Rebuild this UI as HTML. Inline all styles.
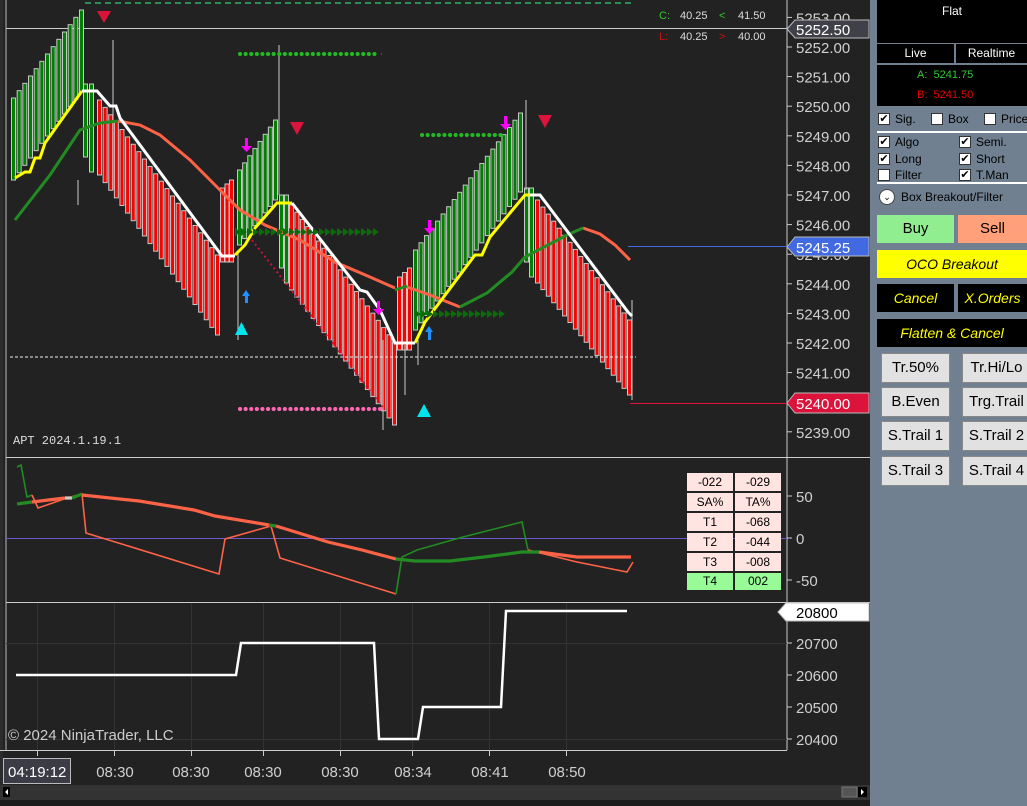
<!DOCTYPE html>
<html><head><meta charset="utf-8"><style>
*{margin:0;padding:0;box-sizing:border-box}
body{width:1027px;height:806px;overflow:hidden;background:#222;font-family:"Liberation Sans",sans-serif;position:relative}
#chart{position:absolute;left:0;top:0}
#panel{position:absolute;left:870px;top:0;width:157px;height:806px;background:#708090;font-size:12px;color:#000}
.blk{position:absolute;background:#000;color:#fff;text-align:center}
.cb{position:absolute;font-size:12px;color:#000;display:flex;align-items:center}
.cb i{display:inline-block;width:12px;height:12px;background:#fff;border:1px solid #333;margin-right:5px;font-style:normal;font-size:11px;line-height:10px;text-align:center}
.btn{position:absolute;text-align:center;font-size:15px}
.gb{position:absolute;background:#e1e1e1;border:1px solid #888;text-align:center;font-size:15px;line-height:27px;width:69px;height:30px}
.ax{font-size:15px;fill:#cfcfcf}
</style></head><body>
<svg id="chart" width="870" height="806" xmlns="http://www.w3.org/2000/svg">
<rect x="0" y="0" width="870" height="806" fill="#222"/>
<rect x="0" y="0" width="3" height="806" fill="#2c2c2c"/>
<line x1="6" y1="0" x2="6" y2="750" stroke="#bbb" stroke-width="1"/>
<line x1="787" y1="0" x2="787" y2="750" stroke="#ccc" stroke-width="1"/>
<line x1="6" y1="457.5" x2="870" y2="457.5" stroke="#ccc"/>
<line x1="6" y1="602.5" x2="870" y2="602.5" stroke="#ccc"/>
<line x1="0" y1="750.5" x2="787" y2="750.5" stroke="#ccc"/>
<line x1="6" y1="28.5" x2="787" y2="28.5" stroke="#ccc"/>
<line x1="85" y1="3" x2="632" y2="3" stroke="#2e8b57" stroke-width="2" stroke-dasharray="6,4"/>
<g id="bars"></g>
<line x1="10" y1="357" x2="636" y2="357" stroke="#eee" stroke-width="1" stroke-dasharray="3,2"/>
<line x1="628" y1="246.5" x2="787" y2="246.5" stroke="#4169e1"/>
<line x1="630" y1="403.5" x2="787" y2="403.5" stroke="#dc143c"/>
<line x1="240" y1="54" x2="380" y2="54" stroke="#22bb22" stroke-width="4" stroke-dasharray="0.1,5.5" stroke-linecap="round"/>
<line x1="422" y1="135" x2="505" y2="135" stroke="#22bb22" stroke-width="4" stroke-dasharray="0.1,5.5" stroke-linecap="round"/>
<line x1="240" y1="409" x2="385" y2="409" stroke="#ff69b4" stroke-width="4" stroke-dasharray="0.1,5.5" stroke-linecap="round"/>
<line x1="252" y1="240" x2="385" y2="410" stroke="#c8143c" stroke-width="2" stroke-dasharray="2,3"/>
<polyline fill="none" stroke="#ff6347" stroke-width="3" points="118,121 140,125 160,135 190,160 215,185 240,210 265,225 300,240 335,262 370,277 395,288"/>
<polyline fill="none" stroke="#ff6347" stroke-width="3" points="407,287 430,295 460,307"/>
<polyline fill="none" stroke="#ff6347" stroke-width="3" points="583,228 600,234 615,245 630,260"/>
<polyline fill="none" stroke="#228b22" stroke-width="3" points="15,220 50,175 80,130 100,123 118,121"/>
<polyline fill="none" stroke="#228b22" stroke-width="3" points="395,290 407,286"/>
<polyline fill="none" stroke="#228b22" stroke-width="3" points="460,307 487,293 512,272 525,257 567,235 583,228"/>
<polyline fill="none" stroke="#ffff00" stroke-width="3" points="15,178 25,172 30,172 35,158 40,158 45,143 82,91"/>
<polyline fill="none" stroke="#ffff00" stroke-width="3" points="235,255 245,245 255,228 277,203 292,203"/>
<polyline fill="none" stroke="#ffff00" stroke-width="3" points="415,343 425,322 475,255 482,255 490,237 525,195 530,195"/>
<polyline fill="none" stroke="#fff" stroke-width="3" points="82,91 97,91 110,106 116,106 120,118 222,256 235,256"/>
<polyline fill="none" stroke="#fff" stroke-width="3" points="292,203 360,290 367,292 380,310 395,343 415,343"/>
<polyline fill="none" stroke="#fff" stroke-width="3" points="530,195 540,195 628,312 632,316"/>
<g id="arr"></g>
<polygon points="97,11 111,11 104,23" fill="#dc143c"/>
<polygon points="290,122 304,122 297,135" fill="#dc143c"/>
<polygon points="538,115 552,115 545,128" fill="#dc143c"/>
<polygon points="235,335 248,335 241.5,322" fill="#00e5ee"/>
<polygon points="417,417 431,417 424,404" fill="#00e5ee"/>
<g fill="#1e90ff"><polygon points="242,296 250,296 246,290"/><rect x="245" y="296" width="3" height="7"/>
<polygon points="425,332 433,332 429,326"/><rect x="428" y="332" width="3" height="8"/></g>
<g fill="#ff00ff"><rect x="245" y="138" width="3" height="8"/><polygon points="241,146 252,146 246.5,152"/>
<rect x="377" y="301" width="3" height="8"/><polygon points="373,309 384,309 378.5,315"/>
<rect x="428" y="220" width="3" height="8"/><polygon points="424,228 435,228 429.5,234"/>
<rect x="504" y="116" width="3" height="8"/><polygon points="500,124 511,124 505.5,130"/></g>
<text x="13" y="444" font-family="Liberation Mono,monospace" font-size="12" fill="#ddd">APT 2024.1.19.1</text>
<g font-size="11" font-family="Liberation Sans,sans-serif">
<text x="659" y="19" fill="#2ecc2e">C:</text><text x="680" y="19" fill="#ddd">40.25</text><text x="719" y="19" fill="#2ecc2e">&lt;</text><text x="738" y="19" fill="#ddd">41.50</text>
<text x="659" y="40" fill="#cc1111">L:</text><text x="680" y="40" fill="#ddd">40.25</text><text x="719" y="40" fill="#cc1111">&gt;</text><text x="738" y="40" fill="#ddd">40.00</text>
</g>
<g class="ax" id="pax"></g>
<polygon points="787,29 795,20 869,20 869,38 795,38" fill="#404048" stroke="#bbb"/>
<text x="796" y="35" font-size="15" fill="#fff">5252.50</text>
<polygon points="787,247 795,237 869,237 869,256 795,256" fill="#4169e1" stroke="#bbb"/>
<text x="796" y="253" font-size="15" fill="#fff">5245.25</text>
<polygon points="787,403 795,393 869,393 869,413 795,413" fill="#dc143c" stroke="#bbb"/>
<text x="796" y="409" font-size="15" fill="#fff">5240.00</text>
<!-- indicator panel -->
<line x1="6" y1="538.5" x2="787" y2="538.5" stroke="#6a5acd"/>
<g stroke-width="1.6" fill="none">
<polyline stroke="#228b22" points="17,467 21,465 27,497 32,495"/>
<polyline stroke="#ff6347" points="32,495 38,508 67,498 82,494 86,533 219,574 225,539 271,526 280,558 396,594"/>
<polyline stroke="#228b22" points="396,594 402,557 417,550 463,537 522,522 528,550"/>
<polyline stroke="#ff6347" points="528,550 577,562 627,572 633,562"/>
</g>
<g stroke-width="3.2" fill="none">
<polyline stroke="#228b22" points="17,504 32,502"/>
<polyline stroke="#ff6347" points="32,502 65,498"/>
<polyline stroke="#ccc" points="65,498 72,498"/>
<polyline stroke="#228b22" points="72,498 82,494"/>
<polyline stroke="#ff6347" points="82,495 139,501 194,510 215,516 269,525"/>
<polyline stroke="#228b22" points="269,525 276,526"/>
<polyline stroke="#ff6347" points="276,526 328,542 362,550 396,559"/>
<polyline stroke="#228b22" points="396,559 415,561 450,561 484,557 522,552 539,552"/>
<polyline stroke="#ff6347" points="539,552 577,557 631,557"/>
</g>
<g font-size="12" text-anchor="middle" font-family="Liberation Sans,sans-serif">
<rect x="687" y="473" width="46" height="18" fill="#ffe4e1"/><text x="710" y="486">-022</text>
<rect x="735" y="473" width="46" height="18" fill="#ffe4e1"/><text x="758" y="486">-029</text>
<rect x="687" y="493" width="46" height="18" fill="#ffe4e1"/><text x="710" y="506">SA%</text>
<rect x="735" y="493" width="46" height="18" fill="#ffe4e1"/><text x="758" y="506">TA%</text>
<rect x="687" y="513" width="46" height="18" fill="#ffe4e1"/><text x="710" y="526">T1</text>
<rect x="735" y="513" width="46" height="18" fill="#ffe4e1"/><text x="758" y="526">-068</text>
<rect x="687" y="533" width="46" height="18" fill="#ffe4e1"/><text x="710" y="546">T2</text>
<rect x="735" y="533" width="46" height="18" fill="#ffe4e1"/><text x="758" y="546">-044</text>
<rect x="687" y="553" width="46" height="18" fill="#ffe4e1"/><text x="710" y="566">T3</text>
<rect x="735" y="553" width="46" height="18" fill="#ffe4e1"/><text x="758" y="566">-008</text>
<rect x="687" y="573" width="46" height="17" fill="#98fb98"/><text x="710" y="585">T4</text>
<rect x="735" y="573" width="46" height="17" fill="#98fb98"/><text x="758" y="585">002</text>
</g>
<g class="ax"><line x1="787" y1="496" x2="792" y2="496" stroke="#ccc"/><text x="796" y="502">50</text>
<line x1="787" y1="538" x2="792" y2="538" stroke="#ccc"/><text x="796" y="544">0</text>
<line x1="787" y1="580" x2="792" y2="580" stroke="#ccc"/><text x="796" y="586">-50</text></g>
<!-- volume panel -->
<g stroke="#333" stroke-width="1">
<line x1="6" y1="643.5" x2="787" y2="643.5"/><line x1="6" y1="739.5" x2="787" y2="739.5"/>
<line x1="37.5" y1="603" x2="37.5" y2="750"/><line x1="114.5" y1="603" x2="114.5" y2="750"/><line x1="191.5" y1="603" x2="191.5" y2="750"/><line x1="263.5" y1="603" x2="263.5" y2="750"/><line x1="340.5" y1="603" x2="340.5" y2="750"/><line x1="412.5" y1="603" x2="412.5" y2="750"/><line x1="489.5" y1="603" x2="489.5" y2="750"/><line x1="566.5" y1="603" x2="566.5" y2="750"/>
</g>
<polyline fill="none" stroke="#fff" stroke-width="2.5" points="16,675 236,675 241,643 374,643 379,739 418,739 423,707 501,707 506,611 627,611"/>
<polygon points="778,612 786,603 869,603 869,621 786,621" fill="#fff" stroke="#bbb"/>
<text x="796" y="618" font-size="15" fill="#000">20800</text>
<g class="ax"><line x1="787" y1="643" x2="792" y2="643" stroke="#ccc"/><text x="796" y="649">20700</text>
<line x1="787" y1="675" x2="792" y2="675" stroke="#ccc"/><text x="796" y="681">20600</text>
<line x1="787" y1="707" x2="792" y2="707" stroke="#ccc"/><text x="796" y="713">20500</text>
<line x1="787" y1="739" x2="792" y2="739" stroke="#ccc"/><text x="796" y="745">20400</text></g>
<text x="8" y="740" font-size="15" fill="#ccc">© 2024 NinjaTrader, LLC</text>
<!-- time axis -->
<g stroke="#ccc"><line x1="37.5" y1="751" x2="37.5" y2="756"/><line x1="114.5" y1="751" x2="114.5" y2="756"/><line x1="191.5" y1="751" x2="191.5" y2="756"/><line x1="263.5" y1="751" x2="263.5" y2="756"/><line x1="340.5" y1="751" x2="340.5" y2="756"/><line x1="412.5" y1="751" x2="412.5" y2="756"/><line x1="489.5" y1="751" x2="489.5" y2="756"/><line x1="566.5" y1="751" x2="566.5" y2="756"/></g>
<rect x="3.5" y="758.5" width="67" height="25" fill="#3c3c46" stroke="#bbb"/>
<text x="8" y="777" font-size="15" fill="#fff">04:19:12</text>
<g class="ax" text-anchor="middle"><text x="115" y="777">08:30</text><text x="191" y="777">08:30</text><text x="263" y="777">08:30</text><text x="340" y="777">08:30</text><text x="413" y="777">08:34</text><text x="490" y="777">08:41</text><text x="567" y="777">08:50</text></g>
<rect x="0" y="785" width="870" height="15" fill="#333"/>
<rect x="3" y="787" width="7" height="10" fill="#000"/><polygon points="8,789 8,795 5,792" fill="#fff"/>
<rect x="842" y="787" width="15" height="10" fill="#555" stroke="#777"/>
<rect x="858" y="787" width="9" height="10" fill="#000"/><polygon points="861,789 861,795 864,792" fill="#fff"/>
<rect x="0" y="800" width="870" height="6" fill="#1c1c1c"/>
</svg>
<div id="panel">
<div class="blk" style="left:7px;top:0;width:150px;height:43px;font-size:12px;padding-top:4px">Flat</div>
<div class="blk" style="left:7px;top:44px;width:77px;height:19px;font-size:12px;line-height:19px">Live</div>
<div class="blk" style="left:86px;top:44px;width:71px;height:19px;font-size:12px;line-height:19px">Realtime</div>
<div class="blk" style="left:7px;top:65px;width:150px;height:41px;font-size:11px;text-align:left">
<div style="position:absolute;left:40px;top:4px;color:#2ecc2e">A:&nbsp; 5241.75</div>
<div style="position:absolute;left:40px;top:24px;color:#e00">B:&nbsp; 5241.50</div></div>
<div class="cb" style="left:8px;top:112px"><i>✔</i>Sig.</div>
<div class="cb" style="left:61px;top:112px"><i></i>Box</div>
<div class="cb" style="left:114px;top:112px"><i></i>Price</div>
<div style="position:absolute;left:7px;top:131px;width:150px;height:2px;background:#fff"></div>
<div class="cb" style="left:8px;top:135px"><i>✔</i>Algo</div>
<div class="cb" style="left:89px;top:135px"><i>✔</i>Semi.</div>
<div class="cb" style="left:8px;top:152px"><i>✔</i>Long</div>
<div class="cb" style="left:89px;top:152px"><i>✔</i>Short</div>
<div class="cb" style="left:8px;top:168px"><i></i>Filter</div>
<div class="cb" style="left:89px;top:168px"><i>✔</i>T.Man</div>
<div style="position:absolute;left:7px;top:182px;width:150px;height:2px;background:#fff"></div>
<div style="position:absolute;left:9px;top:189px;width:16px;height:16px;border-radius:50%;background:#fff;border:1px solid #444;font-size:9px;text-align:center;line-height:14px">⌄</div>
<div class="cb" style="left:31px;top:190px">Box Breakout/Filter</div>
<div class="btn" style="left:7px;top:215px;width:77px;height:28px;background:#90ee90;line-height:28px">Buy</div>
<div class="btn" style="left:88px;top:215px;width:69px;height:28px;background:#ffa07a;line-height:28px">Sell</div>
<div class="btn" style="left:7px;top:250px;width:150px;height:28px;background:#ffff00;line-height:28px;font-style:italic;font-size:14px">OCO Breakout</div>
<div class="btn" style="left:7px;top:284px;width:77px;height:28px;background:#000;color:#ff0;line-height:28px;font-style:italic;font-size:14px">Cancel</div>
<div class="btn" style="left:88px;top:284px;width:69px;height:28px;background:#000;color:#ff0;line-height:28px;font-style:italic;font-size:14px">X.Orders</div>
<div class="btn" style="left:7px;top:319px;width:150px;height:28px;background:#000;color:#ff0;line-height:28px;font-style:italic;font-size:14px">Flatten &amp; Cancel</div>
<div class="gb" style="left:11px;top:353px">Tr.50%</div><div class="gb" style="left:92px;top:353px">Tr.Hi/Lo</div>
<div class="gb" style="left:11px;top:387px">B.Even</div><div class="gb" style="left:92px;top:387px">Trg.Trail</div>
<div class="gb" style="left:11px;top:421px">S.Trail 1</div><div class="gb" style="left:92px;top:421px">S.Trail 2</div>
<div class="gb" style="left:11px;top:456px">S.Trail 3</div><div class="gb" style="left:92px;top:456px">S.Trail 4</div>
</div>
<script>
var NS="http://www.w3.org/2000/svg";
function el(t,a,p){var e=document.createElementNS(NS,t);for(var k in a)e.setAttribute(k,a[k]);p.appendChild(e);return e;}
var g=document.getElementById('bars');
var segs=[
[14,82,98,10,180,92,'#008000'],
[86,92,84,84,157,172,'#008000'],
[100,218,100,255,175,335,'#ff0000'],
[223,232,188,180,262,262,'#ff0000'],
[240,276,170,120,245,200,'#008000'],
[282,287,195,195,268,283,'#008000'],
[292,395,205,342,290,425,'#ff0000'],
[400,410,277,268,350,350,'#ff0000'],
[416,521,250,113,330,192,'#008000'],
[527,532,188,188,262,277,'#008000'],
[538,630,200,320,283,395,'#ff0000']];
segs.forEach(function(s){var n=Math.max(1,Math.round((s[1]-s[0])/5.5));for(var i=0;i<=n;i++){var f=n?i/n:0;var x=s[0]+(s[1]-s[0])*f;var t=s[2]+(s[3]-s[2])*f,b=s[4]+(s[5]-s[4])*f;
el('rect',{x:x-2.5,y:t,width:4,height:b-t,fill:s[6],stroke:'#c8c8c8','stroke-width':1},g);}});
[[78,180,205],[113,40,190],[238,250,340],[279,45,195],[405,345,395],[383,340,430],[418,340,365],[526,100,190],[632,300,400]].forEach(function(w){el('line',{x1:w[0],y1:w[1],x2:w[0],y2:w[2],stroke:'#ccc','stroke-width':1},g);});
var a=document.getElementById('arr');
function strip(x1,x2,y){for(var x=x1;x<x2;x+=6)el('polygon',{points:x+','+(y-4)+' '+(x+6)+','+y+' '+x+','+(y+4),fill:'#0b6b0b'},a);}
strip(235,378,232);strip(415,505,314);
var p=document.getElementById('pax');
for(var v=5253;v>=5239;v--){var y=47+(5252-v)*29.6;el('line',{x1:787,y1:y,x2:792,y2:y,stroke:'#ccc'},p);var t=el('text',{x:796,y:y+6},p);t.textContent=v+'.00';}
</script>
</body></html>
